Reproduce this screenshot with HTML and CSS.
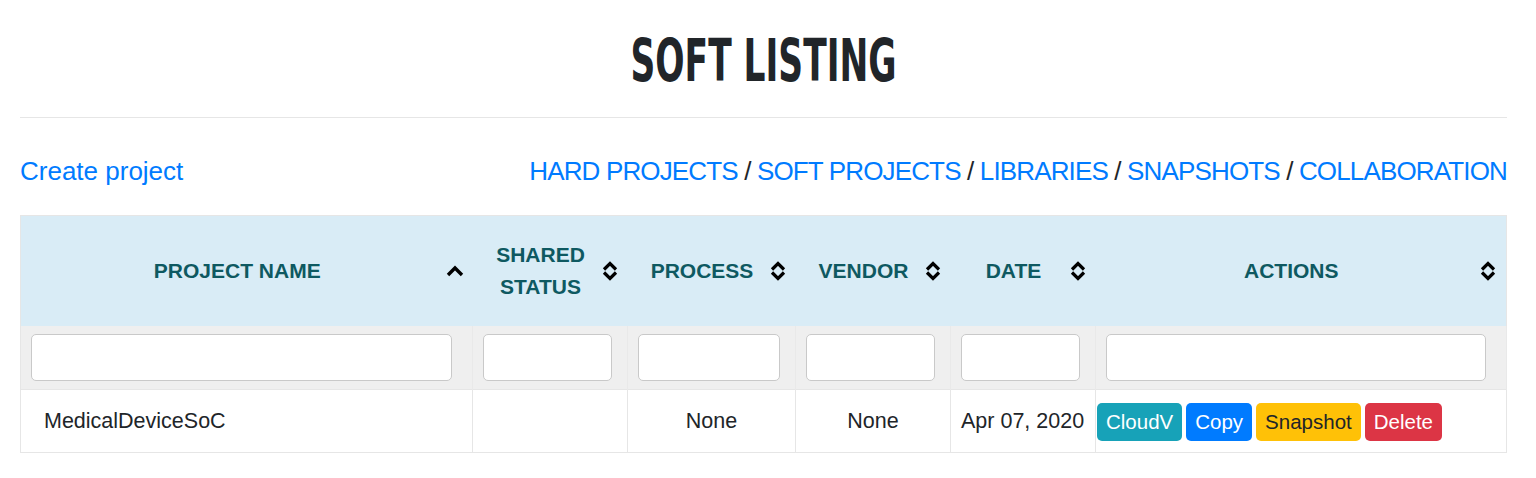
FILE: index.html
```html
<!DOCTYPE html>
<html>
<head>
<meta charset="utf-8">
<link rel="stylesheet" href="styles.css">
</head>
<body>
<div class="page">
  <h1 class="title"><span class="title-text">SOFT LISTING</span></h1>
  <hr class="rule">
  <div class="nav">
    <a class="link" href="#">Create project</a>
    <div class="crumbs">
      <a class="link" href="#">HARD PROJECTS</a> / <a class="link" href="#">SOFT PROJECTS</a> / <a class="link" href="#">LIBRARIES</a> / <a class="link" href="#">SNAPSHOTS</a> / <a class="link" href="#">COLLABORATION</a>
    </div>
  </div>
  <table class="grid">
    <colgroup>
      <col class="c1"><col class="c2"><col class="c3"><col class="c4"><col class="c5"><col class="c6">
    </colgroup>
    <thead>
      <tr class="head-row">
        <th><div class="th-in"><span class="th-text">PROJECT NAME</span><svg class="sort" viewBox="0 0 18 22"><path d="M2 15 L9 8 L16 15" fill="none" stroke="#000" stroke-width="3.4"/></svg></div></th>
        <th><div class="th-in"><span class="th-text">SHARED STATUS</span><svg class="sort" viewBox="0 0 18 22"><path d="M3 9.5 L9 3.5 L15 9.5 M3 12.5 L9 18.5 L15 12.5" fill="none" stroke="#000" stroke-width="3.2"/></svg></div></th>
        <th><div class="th-in"><span class="th-text">PROCESS</span><svg class="sort" viewBox="0 0 18 22"><path d="M3 9.5 L9 3.5 L15 9.5 M3 12.5 L9 18.5 L15 12.5" fill="none" stroke="#000" stroke-width="3.2"/></svg></div></th>
        <th><div class="th-in"><span class="th-text">VENDOR</span><svg class="sort" viewBox="0 0 18 22"><path d="M3 9.5 L9 3.5 L15 9.5 M3 12.5 L9 18.5 L15 12.5" fill="none" stroke="#000" stroke-width="3.2"/></svg></div></th>
        <th><div class="th-in"><span class="th-text">DATE</span><svg class="sort" viewBox="0 0 18 22"><path d="M3 9.5 L9 3.5 L15 9.5 M3 12.5 L9 18.5 L15 12.5" fill="none" stroke="#000" stroke-width="3.2"/></svg></div></th>
        <th><div class="th-in"><span class="th-text">ACTIONS</span><svg class="sort" viewBox="0 0 18 22"><path d="M3 9.5 L9 3.5 L15 9.5 M3 12.5 L9 18.5 L15 12.5" fill="none" stroke="#000" stroke-width="3.2"/></svg></div></th>
      </tr>
      <tr class="filter-row">
        <td class="f-wide"><input class="filter" type="text"></td>
        <td><input class="filter" type="text"></td>
        <td><input class="filter" type="text"></td>
        <td><input class="filter" type="text"></td>
        <td><input class="filter" type="text"></td>
        <td class="f-wide"><input class="filter" type="text"></td>
      </tr>
    </thead>
    <tbody>
      <tr class="data-row">
        <td class="name">MedicalDeviceSoC</td>
        <td></td>
        <td class="center">None</td>
        <td class="center">None</td>
        <td class="date">Apr 07, 2020</td>
        <td class="actions"><div class="btns"><a class="btn btn-info" href="#">CloudV</a><a class="btn btn-primary" href="#">Copy</a><a class="btn btn-warning" href="#">Snapshot</a><a class="btn btn-danger" href="#">Delete</a></div></td>
      </tr>
    </tbody>
  </table>
</div>
</body>
</html>
```
FILE: styles.css
```css
* { box-sizing: border-box; }
body {
  margin: 0;
  background: #fff;
  font-family: "Liberation Sans", Arial, sans-serif;
  color: #212529;
}
.page {
  padding: 0 29px 0 20px;
}
.title {
  margin: 0;
  padding-top: 26px;
  height: 96px;
  line-height: 70px;
  text-align: center;
  font-family: "DejaVu Sans Condensed", "DejaVu Sans", sans-serif;
  font-weight: bold;
  font-size: 58px;
  color: #212529;
}
.title-text {
  display: inline-block;
  transform: scaleX(0.66);
}
.rule {
  margin: 21px 0 0 0;
  border: 0;
  border-top: 1px solid #e6e6e6;
}
.nav {
  display: flex;
  justify-content: space-between;
  align-items: baseline;
  margin-top: 34px;
  font-size: 26px;
  line-height: 38px;
  color: #212529;
}
.crumbs {
  letter-spacing: -0.85px;
}
.link {
  color: #007bff;
  text-decoration: none;
}
.grid {
  margin-top: 25px;
  width: 100%;
  border-collapse: collapse;
  table-layout: fixed;
  border: 1px solid #e6e6e6;
}
.c1 { width: 452px; }
.c2 { width: 155px; }
.c3 { width: 168px; }
.c4 { width: 155px; }
.c5 { width: 145px; }
.c6 { width: auto; }
.head-row th {
  background: #d9ecf6;
  padding: 23px 9px 23px 12px;
  height: 110px;
  font-size: 21px;
  line-height: 32px;
  font-weight: bold;
  color: #0e5961;
}
.th-in {
  display: flex;
  align-items: center;
  gap: 4px;
}
.th-text {
  flex: 1;
  text-align: center;
}
.sort {
  width: 18px;
  height: 22px;
  flex: none;
}
.filter-row td {
  background: #efefef;
  height: 63px;
  padding: 0 15px 0 10px;
  border-right: 1px solid #e9e9e9;
}
.filter-row td.f-wide {
  padding: 0 20px 0 10px;
}
.filter {
  display: block;
  width: 100%;
  height: 47px;
  border: 1px solid #c9c9c9;
  border-radius: 5px;
  background: #fff;
}
.data-row td {
  height: 63px;
  padding-top: 2px;
  border: 1px solid #e6e6e6;
  font-size: 21.5px;
  color: #212529;
  padding-left: 10px;
  padding-right: 10px;
}
.data-row td.name { padding-left: 23px; }
.center { text-align: center; }
.data-row td.actions { padding: 2px 1px 0 1px; }
.btns {
  display: flex;
  gap: 4px;
}
.btn {
  display: inline-block;
  height: 38px;
  line-height: 38px;
  padding: 0 9px;
  border-radius: 5px;
  font-size: 20.5px;
  color: #fff;
  text-decoration: none;
}
.btn-info { background: #17a2b8; }
.btn-primary { background: #007bff; }
.btn-warning { background: #ffc107; color: #212529; }
.btn-danger { background: #dc3545; }
```
